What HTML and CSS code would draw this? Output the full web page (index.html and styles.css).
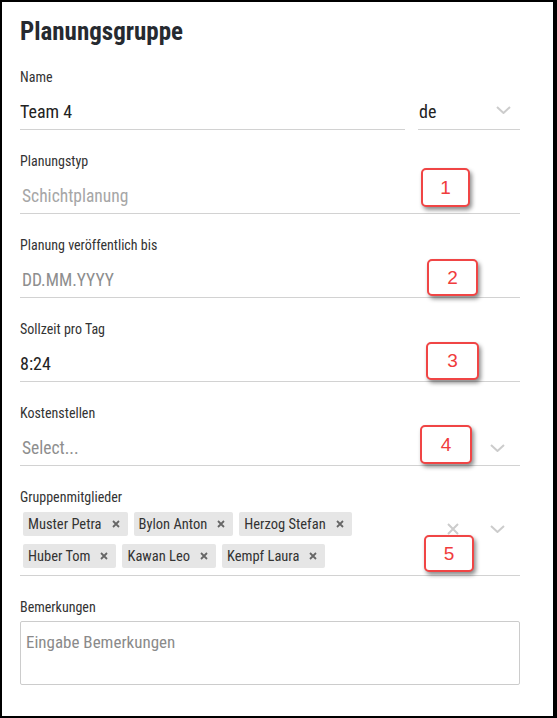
FILE: index.html
```html
<!DOCTYPE html>
<html lang="de">
<head>
<meta charset="utf-8">
<title>Planungsgruppe</title>
<link rel="stylesheet" href="styles.css">
</head>
<body>
<div class="frame">
  <form class="panel">
    <h1 class="title">Planungsgruppe</h1>

    <div class="field">
      <div class="label">Name</div>
      <div class="row">
        <div class="control grow"><span class="value">Team 4</span></div>
        <div class="control lang">
          <span class="value">de</span>
          <svg class="chev chev-lang" width="15" height="8" viewBox="0 0 15 8"><polyline points="1,1 7.5,7 14,1" fill="none" stroke="#cccccc" stroke-width="2"/></svg>
        </div>
      </div>
    </div>

    <div class="field">
      <div class="label">Planungstyp</div>
      <div class="control"><span class="placeholder light">Schichtplanung</span></div>
    </div>

    <div class="field">
      <div class="label">Planung veröffentlich bis</div>
      <div class="control"><span class="placeholder">DD.MM.YYYY</span></div>
    </div>

    <div class="field">
      <div class="label">Sollzeit pro Tag</div>
      <div class="control"><span class="value">8:24</span></div>
    </div>

    <div class="field">
      <div class="label">Kostenstellen</div>
      <div class="control">
        <span class="placeholder grow">Select...</span>
        <svg class="chev chev-sel" width="15" height="8" viewBox="0 0 15 8"><polyline points="1,1 7.5,7 14,1" fill="none" stroke="#cccccc" stroke-width="2"/></svg>
      </div>
    </div>

    <div class="field">
      <div class="label label-tight">Gruppenmitglieder</div>
      <div class="control multi">
        <div class="chips">
          <span class="chip">Muster Petra<svg class="chip-x" width="8" height="8" viewBox="0 0 8 8"><path d="M1 1L7 7M7 1L1 7" stroke="#666" stroke-width="1.8"/></svg></span>
          <span class="chip">Bylon Anton<svg class="chip-x" width="8" height="8" viewBox="0 0 8 8"><path d="M1 1L7 7M7 1L1 7" stroke="#666" stroke-width="1.8"/></svg></span>
          <span class="chip">Herzog Stefan<svg class="chip-x" width="8" height="8" viewBox="0 0 8 8"><path d="M1 1L7 7M7 1L1 7" stroke="#666" stroke-width="1.8"/></svg></span>
          <span class="chip">Huber Tom<svg class="chip-x" width="8" height="8" viewBox="0 0 8 8"><path d="M1 1L7 7M7 1L1 7" stroke="#666" stroke-width="1.8"/></svg></span>
          <span class="chip">Kawan Leo<svg class="chip-x" width="8" height="8" viewBox="0 0 8 8"><path d="M1 1L7 7M7 1L1 7" stroke="#666" stroke-width="1.8"/></svg></span>
          <span class="chip">Kempf Laura<svg class="chip-x" width="8" height="8" viewBox="0 0 8 8"><path d="M1 1L7 7M7 1L1 7" stroke="#666" stroke-width="1.8"/></svg></span>
        </div>
        <div class="indicators">
          <svg width="12" height="12" viewBox="0 0 12 12"><path d="M1 1L11 11M11 1L1 11" stroke="#cccccc" stroke-width="2"/></svg>
          <svg width="15" height="8" viewBox="0 0 15 8"><polyline points="1,1 7.5,7 14,1" fill="none" stroke="#cccccc" stroke-width="2"/></svg>
        </div>
      </div>
    </div>

    <div class="field">
      <div class="label label-area">Bemerkungen</div>
      <textarea class="area" placeholder="Eingabe Bemerkungen"></textarea>
    </div>
  </form>

  <span class="badge b1">1</span>
  <span class="badge b2">2</span>
  <span class="badge b3">3</span>
  <span class="badge b4">4</span>
  <span class="badge b5">5</span>
</div>
</body>
</html>
```

FILE: styles.css
```css
* { box-sizing: border-box; }

html, body {
  margin: 0;
  padding: 0;
  background: #ffffff;
}

body {
  font-family: "Roboto Condensed", Roboto, "Liberation Sans", sans-serif;
  color: #333333;
}

.frame {
  position: relative;
  width: 557px;
  height: 718px;
  border-style: solid;
  border-color: #000000;
  border-width: 2px 4px 2px 2px;
  background: #ffffff;
}

.panel {
  display: flex;
  flex-direction: column;
  gap: 23px;
  padding: 15px 33px 33px 18px;
}

.title {
  margin: 0 0 -1px;
  font-size: 25px;
  line-height: 30px;
  font-weight: 700;
  color: #262a30;
}

.field {
  display: flex;
  flex-direction: column;
}

.label {
  font-size: 14px;
  line-height: 16px;
  color: #333333;
  margin-bottom: 9px;
}

.label-tight { margin-bottom: 7px; }
.label-area { margin-bottom: 6px; }

.row {
  display: flex;
  gap: 13px;
}

.control {
  display: flex;
  align-items: center;
  height: 36px;
  border-bottom: 1px solid #d2d2d2;
}

.grow { flex: 1; }

.lang {
  width: 102px;
  justify-content: space-between;
  padding-left: 1px;
  padding-right: 9px;
}

.value {
  font-size: 18px;
  color: #222222;
}

.placeholder {
  font-size: 17.5px;
  color: #8e8e8e;
  padding-left: 2px;
}

.placeholder.light { color: #a6a6a6; }

.chev-lang { margin-bottom: 4px; }
.chev-sel { margin-right: 15px; }

.multi {
  height: auto;
  align-items: flex-start;
  padding-bottom: 7px;
}

.chips {
  flex: 1;
  display: flex;
  flex-wrap: wrap;
  column-gap: 6px;
  row-gap: 8px;
  padding-left: 3px;
}

.chip {
  display: inline-flex;
  align-items: center;
  height: 24px;
  padding: 0 8px 0 5px;
  background: #e6e6e6;
  border-radius: 2px;
  font-size: 14.5px;
  color: #333333;
}

.chip-x {
  margin-left: 10px;
}

.indicators {
  width: 80px;
  height: 34px;
  display: flex;
  align-items: center;
  justify-content: space-between;
  padding: 0 15px 0 7px;
}

.area {
  display: block;
  width: 100%;
  height: 64px;
  margin: 0;
  padding: 8px 5px;
  border: 1px solid #cccccc;
  border-radius: 2px;
  resize: none;
  font-family: "Roboto Condensed", Roboto, "Liberation Sans", sans-serif;
  font-size: 17px;
  line-height: 24px;
  color: #222222;
  background: #ffffff;
}

.area::placeholder { color: #8a8a8a; }

.badge {
  position: absolute;
  display: flex;
  align-items: center;
  justify-content: center;
  border: 2px solid #f04545;
  border-radius: 5px;
  background: #ffffff;
  box-shadow: 2px 3px 4px rgba(0, 0, 0, 0.45);
  font-family: "Liberation Sans", Arial, sans-serif;
  font-size: 19px;
  color: #f03c3c;
}

.b1 { left: 419px; top: 166px; width: 49px; height: 39px; }
.b2 { left: 425px; top: 257px; width: 51px; height: 37px; }
.b3 { left: 424px; top: 340px; width: 53px; height: 38px; }
.b4 { left: 418px; top: 423px; width: 52px; height: 39px; }
.b5 { left: 422px; top: 533px; width: 50px; height: 37px; }
```
